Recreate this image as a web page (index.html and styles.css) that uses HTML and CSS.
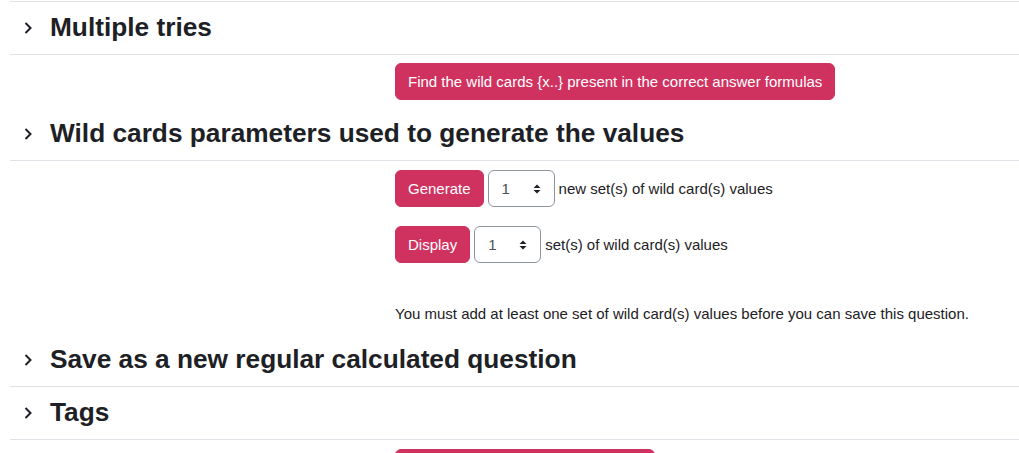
FILE: index.html
```html
<!DOCTYPE html>
<html lang="en">
<head>
    <meta charset="UTF-8">
    <title>Editing a calculated question</title>
    <link rel="stylesheet" href="styles.css">
</head>
<body>
    <div class="form-wrap">
        <div class="cut"></div>

        <div class="section-head">
            <svg class="chevron" width="8" height="12" viewBox="0 0 8 12"><path d="M1.5 1 L6.5 6 L1.5 11" fill="none" stroke="#1d2125" stroke-width="2"/></svg>
            <h3>Multiple tries</h3>
        </div>
        <div class="section-body first">
            <div class="row">
                <button type="button">Find the wild cards {x..} present in the correct answer formulas</button>
            </div>
        </div>

        <div class="section-head">
            <svg class="chevron" width="8" height="12" viewBox="0 0 8 12"><path d="M1.5 1 L6.5 6 L1.5 11" fill="none" stroke="#1d2125" stroke-width="2"/></svg>
            <h3>Wild cards parameters used to generate the values</h3>
        </div>
        <div class="section-body wild">
            <div class="row inline">
                <button type="button">Generate</button>
                <div class="select">
                    <span>1</span>
                    <svg width="10" height="12" viewBox="0 0 10 12"><path d="M1.5 5 L5 1.5 L8.5 5 Z M1.5 7 L5 10.5 L8.5 7 Z" fill="#1d2125"/></svg>
                </div>
                <span class="label">new set(s) of wild card(s) values</span>
            </div>
            <div class="row inline">
                <button type="button">Display</button>
                <div class="select">
                    <span>1</span>
                    <svg width="10" height="12" viewBox="0 0 10 12"><path d="M1.5 5 L5 1.5 L8.5 5 Z M1.5 7 L5 10.5 L8.5 7 Z" fill="#1d2125"/></svg>
                </div>
                <span class="label">set(s) of wild card(s) values</span>
            </div>
            <p class="note">You must add at least one set of wild card(s) values before you can save this question.</p>
        </div>

        <div class="section-head">
            <svg class="chevron" width="8" height="12" viewBox="0 0 8 12"><path d="M1.5 1 L6.5 6 L1.5 11" fill="none" stroke="#1d2125" stroke-width="2"/></svg>
            <h3>Save as a new regular calculated question</h3>
        </div>
        <div class="section-head">
            <svg class="chevron" width="8" height="12" viewBox="0 0 8 12"><path d="M1.5 1 L6.5 6 L1.5 11" fill="none" stroke="#1d2125" stroke-width="2"/></svg>
            <h3>Tags</h3>
        </div>
        <div class="section-body last">
            <div class="row">
                <button type="button" class="wide">Save changes and continue editing</button>
            </div>
        </div>
    </div>
</body>
</html>
```

FILE: styles.css
```css
body {
    margin: 0;
    font-family: "Liberation Sans", Arial, sans-serif;
    font-size: 15px;
    color: #1d2125;
    background-color: white;
}
.form-wrap {
    margin-left: 10px;
}
.cut {
    height: 1px;
    border-bottom: 1px solid #dee2e6;
}
.section-head {
    display: flex;
    align-items: center;
    height: 52px;
    border-bottom: 1px solid #dee2e6;
}
.chevron {
    margin-left: 14px;
    margin-right: 18px;
}
.section-head h3 {
    margin: 0;
    font-size: 26.25px;
    font-weight: bold;
    line-height: 1.2;
}
.section-body {
    padding-left: 385px;
}
.section-body.first {
    padding-top: 8px;
    padding-bottom: 8px;
}
.section-body.wild {
    padding-top: 9px;
    padding-bottom: 9px;
}
.section-body.last {
    padding-top: 9px;
}
.row.inline {
    display: flex;
    align-items: center;
    gap: 4px;
    margin-bottom: 19px;
}
button {
    font-family: inherit;
    font-size: 15px;
    line-height: 23px;
    padding: 6px 12px;
    border: 1px solid #d0325f;
    border-radius: 6px;
    background-color: #d0325f;
    color: white;
    cursor: pointer;
}
button.wide {
    width: 260px;
}
.select {
    display: flex;
    align-items: center;
    justify-content: space-between;
    box-sizing: border-box;
    width: 67px;
    height: 37px;
    padding: 0 12px 0 13px;
    border: 1px solid #8f959e;
    border-radius: 6px;
}
.select span {
    color: #495057;
}
.label {
    line-height: 22px;
}
.note {
    margin: 40px 0 0 0;
    line-height: 22px;
    height: 22px;
}
```
